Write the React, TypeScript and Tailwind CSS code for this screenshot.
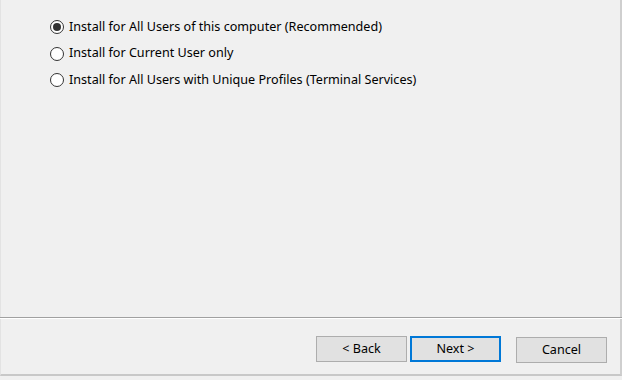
import React, { useState } from "react";

const options = [
  "Install for All Users of this computer (Recommended)",
  "Install for Current User only",
  "Install for All Users with Unique Profiles (Terminal Services)",
];

function Radio({ checked }: { checked: boolean }) {
  return (
    <span className="w-[14px] h-[14px] rounded-full border border-[#333333] bg-white flex items-center justify-center shrink-0">
      {checked ? <span className="w-[8px] h-[8px] rounded-full bg-[#333333]" /> : null}
    </span>
  );
}

function Button({ label, primary }: { label: string; primary?: boolean }) {
  return (
    <button
      className={
        primary
          ? "w-[91px] h-[26px] bg-[#e1e1e1] border-2 border-[#0078d7] text-[12.6px] text-black"
          : "w-[91px] h-[26px] bg-[#e1e1e1] border border-[#adadad] text-[12.6px] text-black"
      }
    >
      {label}
    </button>
  );
}

export default function App() {
  const [sel, setSel] = useState(0);
  return (
    <div
      className="w-[622px] h-[380px] bg-[#f0f0f0] flex flex-col"
      style={{ fontFamily: '"Noto Sans", "Open Sans", sans-serif' }}
    >
      <div className="h-[317px] border-l border-r-2 border-l-[#e3e3e3] border-r-[#cfcfcf] pt-[14px] pl-[49px] flex flex-col">
        {options.map((o, i) => (
          <label
            key={o}
            className="h-[26.5px] flex items-center gap-[5px] text-[12.6px] text-black cursor-default"
            onClick={() => setSel(i)}
          >
            <Radio checked={sel === i} />
            <span>{o}</span>
          </label>
        ))}
      </div>
      <div className="h-[2px] border-t border-t-[#a0a0a0] border-b border-b-white" />
      <div className="h-[57px] border-l border-r-2 border-l-[#e3e3e3] border-r-[#cfcfcf] border-b-2 border-b-[#c8c8c8] flex items-start pt-[17px] pl-[315px]">
        <div className="flex gap-[3px]">
          <Button label="< Back" />
          <Button label="Next >" primary />
        </div>
        <div className="ml-[15px]">
          <Button label="Cancel" />
        </div>
      </div>
    </div>
  );
}
